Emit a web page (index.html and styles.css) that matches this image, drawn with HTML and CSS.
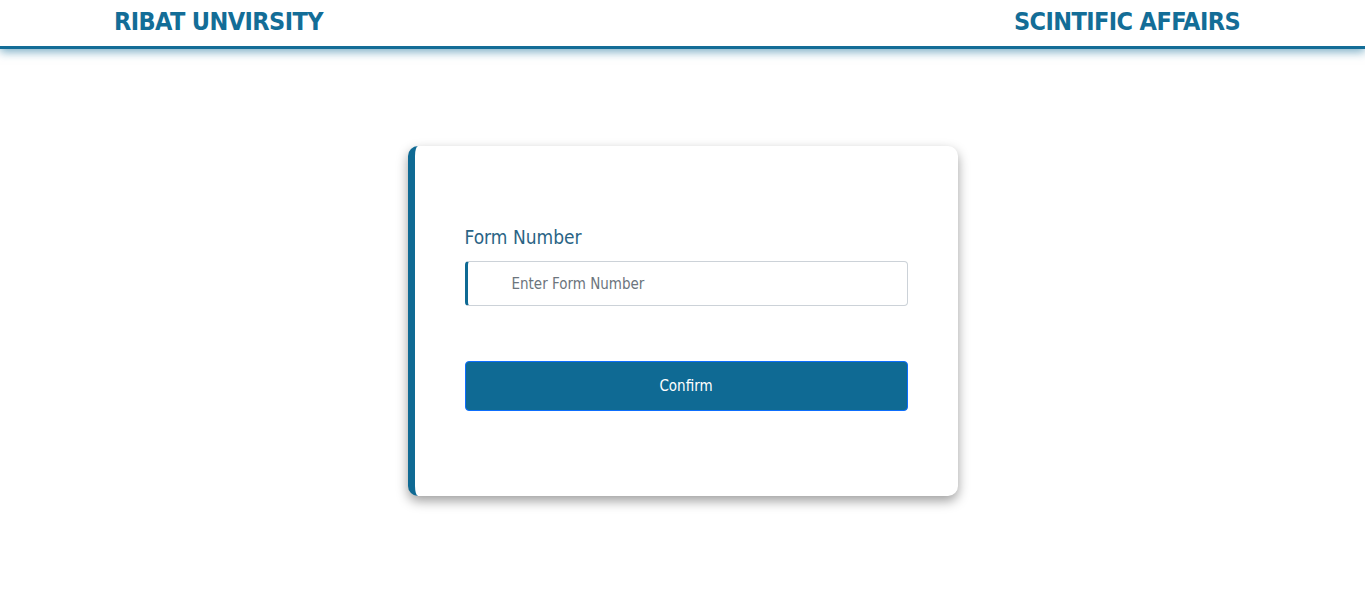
FILE: index.html
```html
<!DOCTYPE html>
<html lang="en">
<head>
<meta charset="utf-8">
<title>Ribat University - Scientific Affairs</title>
<link rel="stylesheet" href="styles.css">
</head>
<body>
<header class="topbar">
  <h1 class="brand">RIBAT UNVIRSITY</h1>
  <h2 class="brand">SCINTIFIC AFFAIRS</h2>
</header>
<main class="page">
  <form class="card">
    <label class="field-label" for="formNumber">Form Number</label>
    <input class="field-input" id="formNumber" type="text" placeholder="Enter Form Number">
    <button class="btn-confirm" type="button">Confirm</button>
  </form>
</main>
</body>
</html>
```

FILE: styles.css
```css
* { box-sizing: border-box; }
html, body { margin: 0; padding: 0; background: #fff; }
body {
  font-family: "DejaVu Sans Condensed", "Noto Sans", sans-serif;
  color: #1d5f82;
  min-height: 590px;
}
.topbar {
  height: 49px;
  display: flex;
  justify-content: space-between;
  align-items: center;
  padding: 0 125px 0 114px;
  border-bottom: 3px solid #136d97;
  box-shadow: 0 3px 9px rgba(19, 109, 151, 0.55);
  background: #fff;
}
.brand {
  margin: 0;
  font-size: 25px;
  font-weight: 700;
  color: #136d97;
  letter-spacing: -0.6px;
  line-height: 1;
  padding-bottom: 3px;
}
.page {
  display: flex;
  justify-content: center;
  padding: 97px 0 80px;
}
.card {
  width: 550px;
  height: 350px;
  background: #fff;
  border-left: 7px solid #0f6a94;
  border-radius: 10px;
  box-shadow: 0 5px 12px rgba(0, 0, 0, 0.38);
  padding: 76px 50px 0 50px;
  display: flex;
  flex-direction: column;
}
.field-label {
  font-size: 19px;
  line-height: 30px;
  color: #2a6485;
  margin-bottom: 9px;
}
.field-input {
  height: 45px;
  width: 100%;
  border: 1px solid #ccd2d8;
  border-left: 3px solid #0f6a94;
  border-radius: 4px;
  padding: 0 0 0 44px;
  font-family: inherit;
  font-size: 15px;
  color: #333;
  outline: none;
}
.field-input::placeholder { color: #6c757d; }
.btn-confirm {
  margin-top: 55px;
  height: 50px;
  width: 100%;
  background: #0f6a94;
  border: 1px solid #0d6efd;
  border-radius: 4px;
  color: #fff;
  font-family: inherit;
  font-size: 15px;
  cursor: pointer;
}
```
